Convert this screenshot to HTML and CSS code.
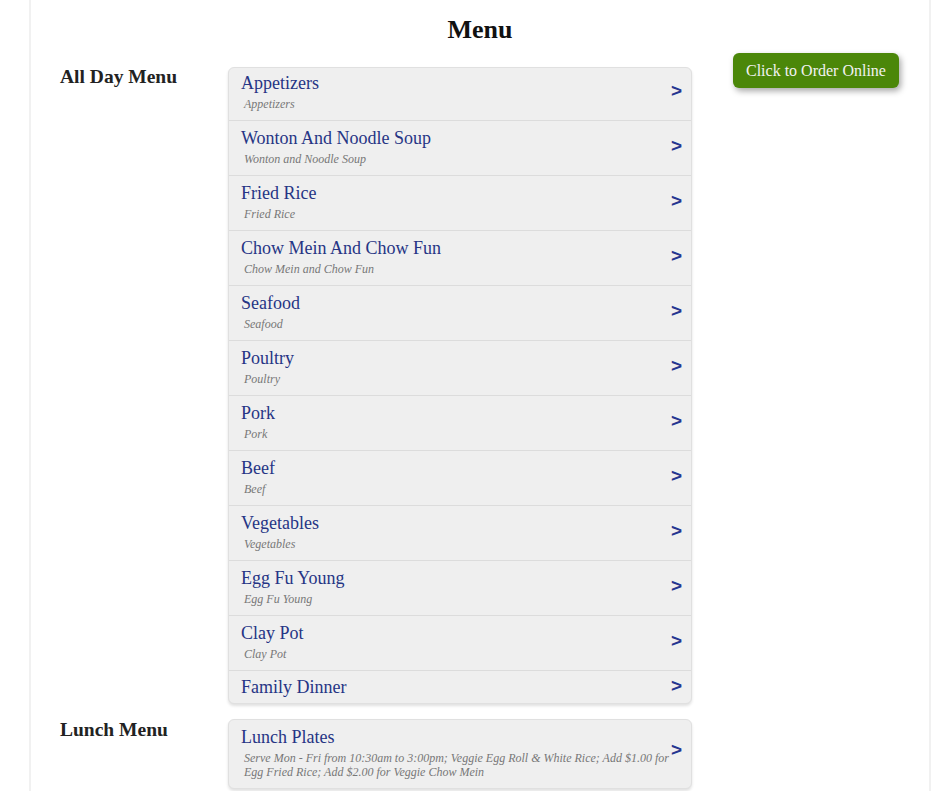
FILE: index.html
```html
<!DOCTYPE html>
<html>
<head>
<meta charset="utf-8">
<link rel="stylesheet" href="styles.css">
</head>
<body>
<div class="page">
  <h1 class="title">Menu</h1>
  <div class="section first">
    <h2 class="label">All Day Menu</h2>
    <div class="list">
      <div class="item"><div class="text"><div class="name">Appetizers</div><div class="desc">Appetizers</div></div><span class="arrow">&gt;</span></div>
      <div class="item"><div class="text"><div class="name">Wonton And Noodle Soup</div><div class="desc">Wonton and Noodle Soup</div></div><span class="arrow">&gt;</span></div>
      <div class="item"><div class="text"><div class="name">Fried Rice</div><div class="desc">Fried Rice</div></div><span class="arrow">&gt;</span></div>
      <div class="item"><div class="text"><div class="name">Chow Mein And Chow Fun</div><div class="desc">Chow Mein and Chow Fun</div></div><span class="arrow">&gt;</span></div>
      <div class="item"><div class="text"><div class="name">Seafood</div><div class="desc">Seafood</div></div><span class="arrow">&gt;</span></div>
      <div class="item"><div class="text"><div class="name">Poultry</div><div class="desc">Poultry</div></div><span class="arrow">&gt;</span></div>
      <div class="item"><div class="text"><div class="name">Pork</div><div class="desc">Pork</div></div><span class="arrow">&gt;</span></div>
      <div class="item"><div class="text"><div class="name">Beef</div><div class="desc">Beef</div></div><span class="arrow">&gt;</span></div>
      <div class="item"><div class="text"><div class="name">Vegetables</div><div class="desc">Vegetables</div></div><span class="arrow">&gt;</span></div>
      <div class="item"><div class="text"><div class="name">Egg Fu Young</div><div class="desc">Egg Fu Young</div></div><span class="arrow">&gt;</span></div>
      <div class="item"><div class="text"><div class="name">Clay Pot</div><div class="desc">Clay Pot</div></div><span class="arrow">&gt;</span></div>
      <div class="item short"><div class="text"><div class="name">Family Dinner</div></div><span class="arrow">&gt;</span></div>
    </div>
    <div class="side"><a class="order" href="#">Click to Order Online</a></div>
  </div>
  <div class="section">
    <h2 class="label">Lunch Menu</h2>
    <div class="list">
      <div class="item lunch"><div class="text"><div class="name">Lunch Plates</div><div class="desc">Serve Mon - Fri from 10:30am to 3:00pm; Veggie Egg Roll &amp; White Rice; Add $1.00 for Egg Fried Rice; Add $2.00 for Veggie Chow Mein</div></div><span class="arrow">&gt;</span></div>
    </div>
    <div class="side"></div>
  </div>
</div>
</body>
</html>
```
FILE: styles.css
```css
html, body {
  margin: 0;
  padding: 0;
  background: #fff;
  font-family: "Liberation Serif", "Times New Roman", serif;
}
.page {
  margin-left: 29px;
  width: 902px;
  min-height: 791px;
  box-sizing: border-box;
  border-left: 2px solid #f1f1f1;
  border-right: 2px solid #f1f1f1;
}
.title {
  margin: 0;
  padding-top: 15px;
  font-size: 26px;
  line-height: 30px;
  font-weight: bold;
  color: #111;
  text-align: center;
}
.section {
  display: grid;
  grid-template-columns: 197px 464px 1fr;
  align-items: start;
}
.section.first {
  margin-top: 8px;
}
.section + .section {
  margin-top: 15px;
}
.label {
  margin: 0;
  padding-left: 29px;
  font-size: 19.5px;
  line-height: 22px;
  font-weight: bold;
  color: #222;
}
.first .label {
  padding-top: 13px;
}
.first .list {
  margin-top: 14px;
}
.list {
  background: #efefef;
  border: 1px solid #e0e0e0;
  border-radius: 6px;
  box-shadow: 0 2px 3px rgba(0,0,0,0.12);
}
.item {
  display: flex;
  align-items: center;
  padding: 7px 9px 9px 12px;
  border-bottom: 1px solid #dcdcdc;
}
.item:first-child {
  padding-top: 5px;
}
.item:last-child {
  border-bottom: none;
}
.item.short {
  padding-top: 6px;
  padding-bottom: 5px;
}
.item.lunch {
  padding-top: 7px;
  padding-bottom: 9px;
}
.text {
  flex: 1;
  min-width: 0;
}
.name {
  font-size: 18px;
  line-height: 21px;
  color: #263585;
}
.desc {
  margin-top: 3px;
  padding-left: 3px;
  font-size: 12px;
  line-height: 14px;
  font-style: italic;
  color: #777;
}
.arrow {
  flex: none;
  margin-bottom: 3px;
  line-height: 14px;
  font-family: "Liberation Sans", Arial, sans-serif;
  font-weight: bold;
  font-size: 19px;
  color: #263590;
}
.lunch .arrow {
  margin-bottom: 6px;
}
.side {
  padding-left: 41px;
}
.order {
  display: inline-block;
  padding: 8px 13px;
  line-height: 19px;
  font-size: 16px;
  color: #f2f2f2;
  text-decoration: none;
  background: #4b8709;
  border-radius: 6px;
  box-shadow: 2px 3px 6px rgba(0,0,0,0.35);
}
```
